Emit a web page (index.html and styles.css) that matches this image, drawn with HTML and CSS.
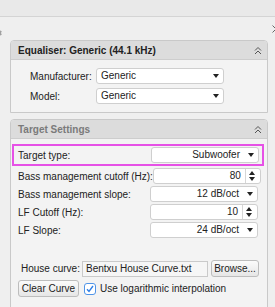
FILE: index.html
```
<!DOCTYPE html>
<html>
	<head>
		<link rel="stylesheet" href="styles.css">
		<title>Equaliser</title>
	</head>
	<body>
		<div class="titlebar"></div>
		<div class="dock">
			<div class="dock-head">
				<svg class="gear" width="12" height="12" viewBox="0 0 12 12"><path d="M6 0.5 7 2 8.8 1.6 9.1 3.4 10.8 4.2 10 5.9 10.8 7.8 9.1 8.6 8.8 10.4 7 10 6 11.5 5 10 3.2 10.4 2.9 8.6 1.2 7.8 2 6 1.2 4.2 2.9 3.4 3.2 1.6 5 2Z" fill="#a0a0a0"/><circle cx="6" cy="6" r="2" fill="#efefef"/></svg>
				<svg class="more" width="5" height="8" viewBox="0 0 5 8"><path d="M0.5 0.5 4 4 0.5 7.5" fill="none" stroke="#666" stroke-width="1"/></svg>
			</div>
			<section class="panel">
				<header class="panel-head">
					<span class="panel-title">Equaliser: Generic (44.1 kHz)</span>
					<svg class="collapse" width="8" height="9" viewBox="0 0 8 9"><path d="M1 4.5 4 1.5 7 4.5M1 8 4 5 7 8" fill="none" stroke="#555" stroke-width="1"/></svg>
				</header>
				<div class="panel-body eq-form">
					<label>Manufacturer:</label>
					<div class="combo">Generic<i class="arrow"></i></div>
					<label>Model:</label>
					<div class="combo">Generic<i class="arrow"></i></div>
				</div>
			</section>
			<section class="panel">
				<header class="panel-head">
					<span class="panel-title dim">Target Settings</span>
					<svg class="collapse" width="8" height="9" viewBox="0 0 8 9"><path d="M1 4.5 4 1.5 7 4.5M1 8 4 5 7 8" fill="none" stroke="#555" stroke-width="1"/></svg>
				</header>
				<div class="panel-body target-form">
					<div class="row marked">
						<label>Target type:</label>
						<div class="combo right">Subwoofer<i class="arrow"></i></div>
					</div>
					<div class="row">
						<label>Bass management cutoff (Hz):</label>
						<div class="spin"><span class="value">80</span><i class="steps"></i></div>
					</div>
					<div class="row">
						<label>Bass management slope:</label>
						<div class="combo right">12 dB/oct<i class="arrow"></i></div>
					</div>
					<div class="row">
						<label>LF Cutoff (Hz):</label>
						<div class="spin"><span class="value">10</span><i class="steps"></i></div>
					</div>
					<div class="row">
						<label>LF Slope:</label>
						<div class="combo right">24 dB/oct<i class="arrow"></i></div>
					</div>
					<div class="house">
						<label>House curve:</label>
						<div class="line-edit">Bentxu House Curve.txt</div>
						<button class="btn browse">Browse...</button>
					</div>
					<div class="curve-opts">
						<button class="btn clear">Clear Curve</button>
						<span class="check"><svg width="8" height="8" viewBox="0 0 8 8"><path d="M1 4.2 3 6.5 7 1" fill="none" stroke="#2f7fe6" stroke-width="1.4"/></svg></span>
						<span class="check-label">Use logarithmic interpolation</span>
					</div>
				</div>
			</section>
		</div>
	</body>
</html>
```

FILE: styles.css
```
body{ margin: 0; background: #efefef; font-family: "Liberation Sans", Arial, sans-serif; font-size: 10px; color: #222; overflow: hidden; }
label{ white-space: nowrap; }

.titlebar{ height: 16px; background: #e9e9e9; border-bottom: 1px solid #d4d4d4; }
.dock{ padding: 0 7px 0 10px; }
.dock-head{ height: 23px; display: flex; justify-content: space-between; margin: 0 -9px 0 -19px; }
.gear{ margin-top: 10px; }
.more{ margin-top: 8px; }

.panel{ border: 1px solid #c9c9c9; border-radius: 4px 4px 0 0; background: #f3f3f3; margin-bottom: 6px; }
.panel-head{ height: 18px; display: flex; align-items: center; justify-content: space-between; padding: 0 5px 0 7px; background: #dcdcdc; border-bottom: 1px solid #cdcdcd; border-radius: 3px 3px 0 0; }
.panel-title{ font-weight: bold; color: #222; }
.panel-title.dim{ color: #7a7a7a; }
.collapse{ display: block; }

.eq-form{ display: grid; grid-template-columns: 66px 128px; row-gap: 4px; align-items: center; padding: 8px 0 8px 19px; }

.combo, .spin{ position: relative; box-sizing: border-box; height: 16px; line-height: 14px; background: #fff; border: 1px solid #cfcfcf; border-radius: 3px; padding: 0 18px 0 4px; white-space: nowrap; }
.combo.right{ text-align: right; }
.arrow{ position: absolute; right: 4px; top: 5px; border-left: 3.5px solid transparent; border-right: 3.5px solid transparent; border-top: 4px solid #222; }

.spin{ padding: 0; display: flex; }
.spin .value{ flex: 1; text-align: right; padding-right: 4px; }
.steps{ width: 14px; border-left: 1px solid #d6d6d6; position: relative; }
.steps::before, .steps::after{ content: ""; position: absolute; left: 3px; border-left: 3.5px solid transparent; border-right: 3.5px solid transparent; }
.steps::before{ top: 2px; border-bottom: 4px solid #222; }
.steps::after{ top: 8px; border-top: 4px solid #222; }

.target-form{ padding: 5px 9px 20px 7px; }
.row{ display: grid; grid-template-columns: 1fr 108px; align-items: center; margin-top: 2px; }
.row.marked{ margin: 0 -6px 1px -6px; border: 2px solid #e651e6; padding: 1px 3px 1px 4px; }

.house{ display: flex; align-items: center; margin-top: 22px; padding-left: 3px; }
.house label{ flex: 1; }
.line-edit{ box-sizing: border-box; width: 126px; height: 16px; line-height: 14px; background: #f6f6f6; border: 1px solid #cacaca; padding: 0 3px; }
.btn{ font: inherit; color: #222; box-sizing: border-box; height: 17px; padding: 0; border: 1px solid #bdbdbd; border-radius: 3px; background: linear-gradient(#fbfbfb, #e6e6e6); }
.browse{ width: 48px; margin-left: 3px; margin-right: -1px; }

.curve-opts{ display: flex; align-items: center; margin-top: 3px; }
.clear{ width: 61px; }
.check{ box-sizing: border-box; width: 12px; height: 12px; margin-left: 5px; border: 1px solid #4f94e8; border-radius: 3px; background: #fff; display: flex; align-items: center; justify-content: center; }
.check-label{ margin-left: 4px; }
```
